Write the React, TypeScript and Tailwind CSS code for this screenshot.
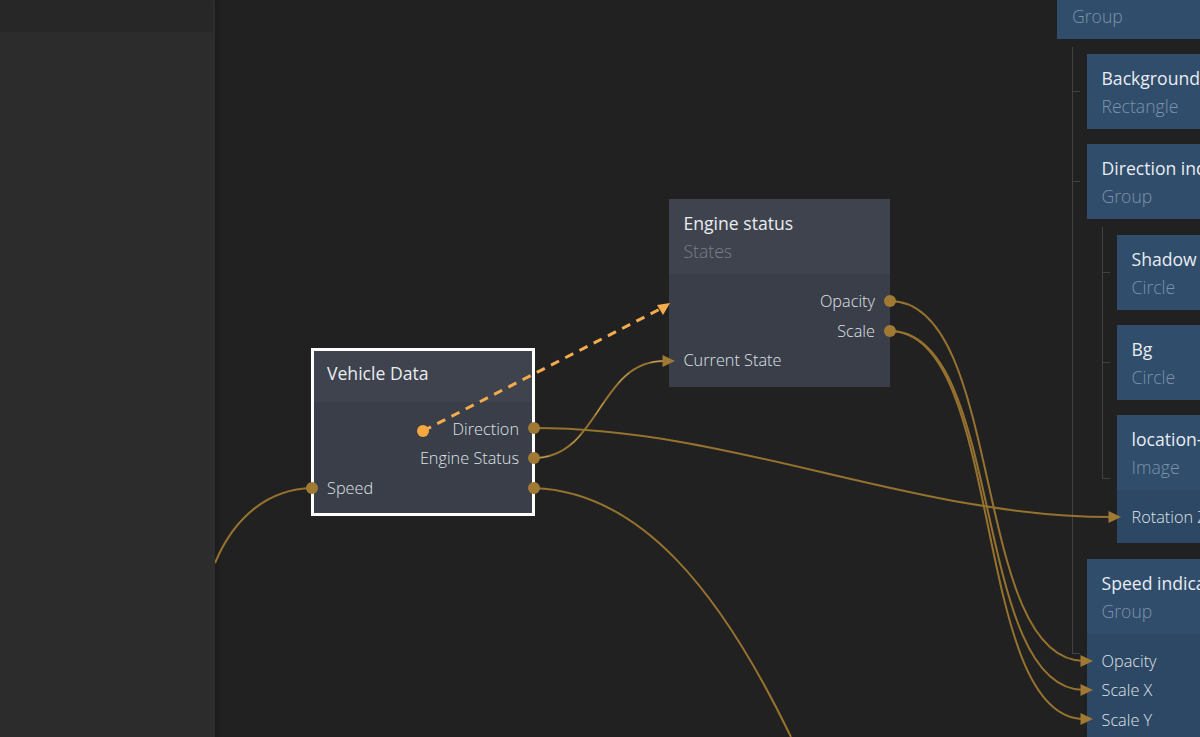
import React from "react";

type Row = { label: string; right?: boolean };

type NodeProps = {
  title?: string;
  sub?: string;
  blue?: boolean;
  selected?: boolean;
  className: string;
  headerClass: string;
  bodyClass?: string;
  rows?: Row[];
};

const CanvasNode: React.FC<NodeProps> = ({ title, sub, blue, selected, className, headerClass, bodyClass, rows }) => {
  return (
    <div
      className={`flex flex-col overflow-hidden ${blue ? "bg-[#2d4864]" : "bg-[#3a3e48]"} ${
        selected ? "border-[3px] border-white" : ""
      } ${className}`}
    >
      <div className={`flex flex-col shrink-0 ${blue ? "bg-[#304d6c]" : "bg-[#3f434e]"} ${headerClass}`}>
        {title && <span className="text-[17.6px] leading-[23px] text-[#e9ecf0] whitespace-nowrap">{title}</span>}
        {sub && (
          <span className={`text-[17.6px] leading-[23px] mt-[5px] font-light whitespace-nowrap ${blue ? "text-[#7c93aa]" : "text-[#7b7f89]"}`}>
            {sub}
          </span>
        )}
      </div>
      {rows && (
        <div className={`flex flex-col ${bodyClass}`}>
          {rows.map((r, i) => (
            <span
              key={i}
              className={`h-[29.5px] leading-[29.5px] text-[16.3px] font-light text-[#dfe2e7] whitespace-nowrap ${r.right ? "text-right" : ""}`}
            >
              {r.label}
            </span>
          ))}
        </div>
      )}
    </div>
  );
};

// hierarchy connector: a vertical line ending in a tick, and one tick per child
const Children = ({ bottom, top, className, children }: { bottom: string; top: string; className: string; children: React.ReactNode }) => (
  <div className={`relative flex flex-col gap-[15px] ${className}`}>
    <div className={`absolute left-[-15px] w-[8px] border-l border-b border-[#414141] ${top} ${bottom}`} />
    {children}
  </div>
);

const Item = ({ children, tick = true }: { children: React.ReactNode; tick?: boolean }) => (
  <div className="relative flex flex-col">
    {tick && <div className="absolute left-[-15px] top-[37px] w-[8px] border-t border-[#414141]" />}
    {children}
  </div>
);

const Arrow = ({ x, y }: { x: number; y: number }) => (
  <polygon points={`${x - 12.5},${y - 6} ${x},${y} ${x - 12.5},${y + 6}`} fill="#a07a35" />
);

const Wires = () => (
  <svg className="absolute left-0 top-0 pointer-events-none" width="985" height="737" viewBox="215 0 985 737" fill="none">
    <g stroke="#96722f" strokeWidth="2">
      <path d="M215 563 C235 515 270 489 312 488" />
      <path d="M534 428 C734 428 912 517 1112 517" />
      <path d="M534 458 C600 458 598 361 664 361" />
      <path d="M534 488 C640 492 720 590 791 737" />
      <path d="M890 301 C1005 301 971 661 1084 661" />
      <path d="M890 331 C1005 331 971 690 1084 690" />
      <path d="M890 331 C1005 331 971 719 1084 719" />
    </g>
    <path d="M534 458 C600 458 598 361 664 361" stroke="#ead29c" strokeWidth="1" pathLength="100" strokeDasharray="9 14" opacity="0.5" />
    <path d="M423 431 L662 308" stroke="#f4ac4c" strokeWidth="3" strokeDasharray="9 7" />
    <polygon points="657,305 670,303 663,315" fill="#f4ac4c" />
    <circle cx="423" cy="431" r="6" fill="#f4a83f" />
    <Arrow x={675} y={361} />
    <Arrow x={1121} y={517} />
    <Arrow x={1093} y={661} />
    <Arrow x={1093} y={690} />
    <Arrow x={1093} y={719} />
    <g fill="#a07a35">
      <circle cx="312" cy="488" r="6" />
      <circle cx="534" cy="428" r="6" />
      <circle cx="534" cy="458" r="6" />
      <circle cx="534" cy="488" r="6" />
      <circle cx="890" cy="301" r="6" />
      <circle cx="890" cy="331" r="6" />
    </g>
  </svg>
);

const blueNode = "w-[200px] h-[75px]";
const blueHeader = "h-[75px] px-[14.5px] pt-[13px]";
const blueBody = "px-[14.5px] pt-[12.5px]";

export default function App() {
  return (
    <div className="flex w-[1200px] h-[737px] overflow-hidden bg-[#212121] font-['Open_Sans',sans-serif]">
      <aside className="w-[215px] shrink-0 flex flex-col border-r-[3px] border-[#2e2e2e]">
        <div className="h-[32px] bg-[#272727] shadow-[0_1px_3px_rgba(0,0,0,0.25)]" />
        <div className="flex-1 bg-[#2c2c2c]" />
      </aside>
      <main className="relative flex-1 shadow-[inset_6px_0_6px_-4px_rgba(0,0,0,0.2)]">
        <CanvasNode
          selected
          title="Vehicle Data"
          className="absolute left-[96px] top-[348px] w-[224px] h-[168px]"
          headerClass="h-[51px] pt-[11px] px-[13px]"
          bodyClass="pt-[12.5px] pr-[13px] pl-[13px]"
          rows={[{ label: "Direction", right: true }, { label: "Engine Status", right: true }, { label: "Speed" }]}
        />
        <CanvasNode
          title="Engine status"
          sub="States"
          className="absolute left-[454px] top-[199px] w-[221px] h-[188px]"
          headerClass="h-[75px] pt-[13px] px-[14.5px]"
          bodyClass="pt-[13px] pl-[14.5px] pr-[15px]"
          rows={[{ label: "Opacity", right: true }, { label: "Scale", right: true }, { label: "Current State" }]}
        />

        <div className="absolute left-[842px] top-[-36px] flex flex-col w-[400px]">
          <CanvasNode blue sub="Group" className={blueNode} headerClass="h-[75px] px-[15px] pt-[36px]" />
          <Children className="ml-[30px] mt-[15px]" top="top-[-7px]" bottom="bottom-[105px]">
            <Item>
              <CanvasNode blue title="Background" sub="Rectangle" className={blueNode} headerClass={blueHeader} />
            </Item>
            <Item>
              <CanvasNode blue title="Direction indicator" sub="Group" className={blueNode} headerClass={blueHeader} />
              <Children className="ml-[30px] mt-[16px] mb-[1px]" top="top-[-8px]" bottom="bottom-[64px]">
                <Item>
                  <CanvasNode blue title="Shadow" sub="Circle" className={blueNode} headerClass={blueHeader} />
                </Item>
                <Item>
                  <CanvasNode blue title="Bg" sub="Circle" className={blueNode} headerClass={blueHeader} />
                </Item>
                <Item tick={false}>
                  <CanvasNode
                    blue
                    title="location-arrow"
                    sub="Image"
                    className="w-[200px] h-[128px]"
                    headerClass={blueHeader}
                    bodyClass={blueBody}
                    rows={[{ label: "Rotation Z" }]}
                  />
                </Item>
              </Children>
            </Item>
            <Item tick={false}>
              <CanvasNode
                blue
                title="Speed indicator"
                sub="Group"
                className="w-[200px] h-[200px]"
                headerClass={blueHeader}
                bodyClass={blueBody}
                rows={[{ label: "Opacity" }, { label: "Scale X" }, { label: "Scale Y" }]}
              />
            </Item>
          </Children>
        </div>

        <Wires />
      </main>
    </div>
  );
}
